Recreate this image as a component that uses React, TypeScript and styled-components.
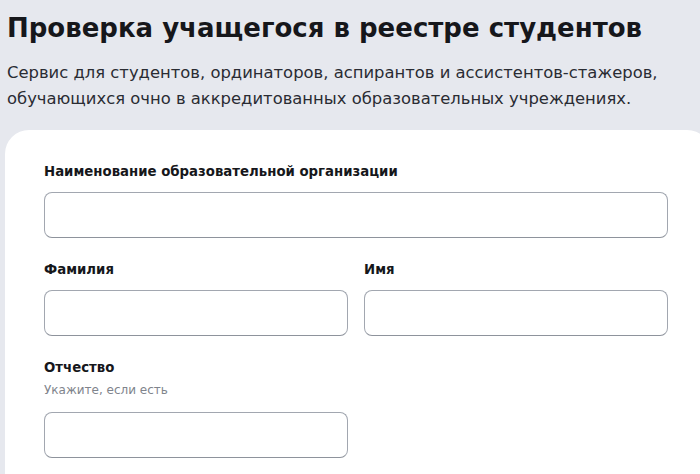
import React from 'react';
import styled, { createGlobalStyle } from 'styled-components';

const GlobalStyle = createGlobalStyle`
  html, body {
    margin: 0;
    padding: 0;
    background: #e6e8ee;
    overflow: hidden;
  }
  * {
    box-sizing: border-box;
  }
`;

const Page = styled.div`
  width: 700px;
  height: 474px;
  overflow: hidden;
  display: flex;
  flex-direction: column;
  font-family: 'DejaVu Sans', sans-serif;
  color: #16171b;
  padding: 12px 0 0 5px;
`;

const Title = styled.h1`
  margin: 0 0 0 2px;
  font-size: 26px;
  line-height: 32px;
  font-weight: 700;
`;

const Lead = styled.p`
  margin: 16px 0 0 2px;
  font-size: 16.4px;
  line-height: 26px;
  color: #2a2c33;
`;

const Card = styled.section`
  flex: 1;
  margin-top: 18px;
  width: 706px;
  flex-shrink: 0;
  background: #fff;
  border-radius: 24px 24px 0 0;
  padding: 34px 0 0 39px;
`;

const Form = styled.div`
  width: 624px;
  display: flex;
  flex-direction: column;
  gap: 24px;
`;

const Row = styled.div`
  display: grid;
  grid-template-columns: 1fr 1fr;
  gap: 16px;
`;

const Field = styled.div`
  display: flex;
  flex-direction: column;
`;

const Label = styled.label`
  font-size: 13.3px;
  line-height: 16px;
  font-weight: 600;
  color: #16171b;
`;

const Hint = styled.span`
  margin-top: 7px;
  font-size: 12px;
  line-height: 14px;
  color: #80848c;
`;

const Input = styled.input<{ $hinted?: boolean }>`
  margin-top: ${p => (p.$hinted ? '15px' : '12px')};
  height: 46px;
  width: 100%;
  border: 1px solid #a2a7b0;
  border-bottom-color: #8e939c;
  border-radius: 8px;
  background: #fff;
  font: inherit;
  padding: 0 12px;
  outline: none;
`;

export default function App() {
  return (
    <Page>
      <GlobalStyle />
      <Title>Проверка учащегося в реестре студентов</Title>
      <Lead>
        Сервис для студентов, ординаторов, аспирантов и ассистентов-стажеров,
        <br />
        обучающихся очно в аккредитованных образовательных учреждениях.
      </Lead>
      <Card>
        <Form>
          <Field>
            <Label>Наименование образовательной организации</Label>
            <Input />
          </Field>
          <Row>
            <Field>
              <Label>Фамилия</Label>
              <Input />
            </Field>
            <Field>
              <Label>Имя</Label>
              <Input />
            </Field>
          </Row>
          <Row>
            <Field>
              <Label>Отчество</Label>
              <Hint>Укажите, если есть</Hint>
              <Input $hinted />
            </Field>
          </Row>
        </Form>
      </Card>
    </Page>
  );
}
